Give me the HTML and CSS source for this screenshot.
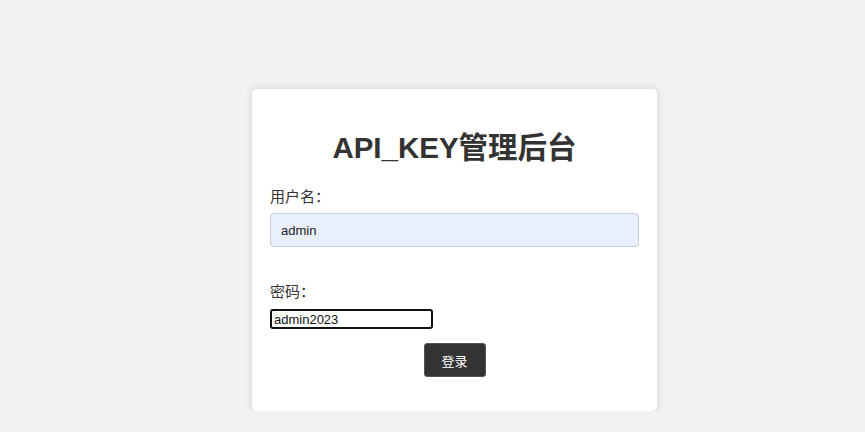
FILE: index.html
```html
<!DOCTYPE html>
<html lang="zh-CN">
  <head>
    <meta charset="UTF-8" />
    <meta name="viewport" content="width=device-width, initial-scale=1.0" />
    <title>API_KEY管理后台</title>
    <link rel="stylesheet" href="styles.css">
  </head>
  <body>
    <div class="login-box">
      <h1>API_KEY管理后台</h1>
      <form id="loginForm">
        <label for="username">用户名：</label>
        <input type="text" id="username" name="username" class="user-input" value="admin" />
        <label for="password" class="pwd-label">密码：</label>
        <input type="text" id="password" name="password" class="pwd-input" value="admin2023" />
        <div class="actions">
          <button type="submit" class="login-btn">登录</button>
        </div>
      </form>
    </div>
  </body>
</html>
```

FILE: styles.css
```css
body {
  margin: 0;
  padding-left: 44px;
  background-color: #f2f2f2;
  font-family: "Liberation Sans", "Noto Sans CJK SC", sans-serif;
  color: #333;
}

.login-box {
  width: 405px;
  box-sizing: border-box;
  margin: 89px auto 0;
  padding: 20px 18px 34px;
  background-color: #fff;
  border-radius: 5px;
  box-shadow: 0 0 8px rgba(0, 0, 0, 0.15);
}

h1 {
  margin: 20px 0 20px;
  font-size: 29.5px;
  line-height: 37px;
  text-align: center;
  color: #333;
}

label {
  display: block;
  font-size: 15px;
  line-height: 21px;
  margin-bottom: 6px;
}

.pwd-label {
  margin-top: 34px;
  margin-bottom: 7px;
}

.user-input {
  display: block;
  width: 100%;
  height: 34px;
  box-sizing: border-box;
  padding: 0 10px;
  border: 1px solid #c8ccd4;
  border-radius: 4px;
  background-color: #e8f0fe;
  font-family: "Liberation Sans", sans-serif;
  font-size: 13px;
  color: #222;
}

.pwd-input {
  display: block;
  width: 163px;
  height: 20px;
  box-sizing: border-box;
  padding: 0 2px;
  border: 2px solid #111;
  border-radius: 3px;
  font-family: "Liberation Sans", sans-serif;
  font-size: 13px;
  color: #111;
  outline: none;
}

.actions {
  text-align: center;
  margin-top: 14px;
}

.login-btn {
  width: 62px;
  height: 34px;
  background-color: #333;
  color: white;
  border: 1px solid #555;
  border-radius: 3px;
  font-family: "Noto Sans CJK SC", sans-serif;
  font-size: 13px;
  cursor: pointer;
}
```
